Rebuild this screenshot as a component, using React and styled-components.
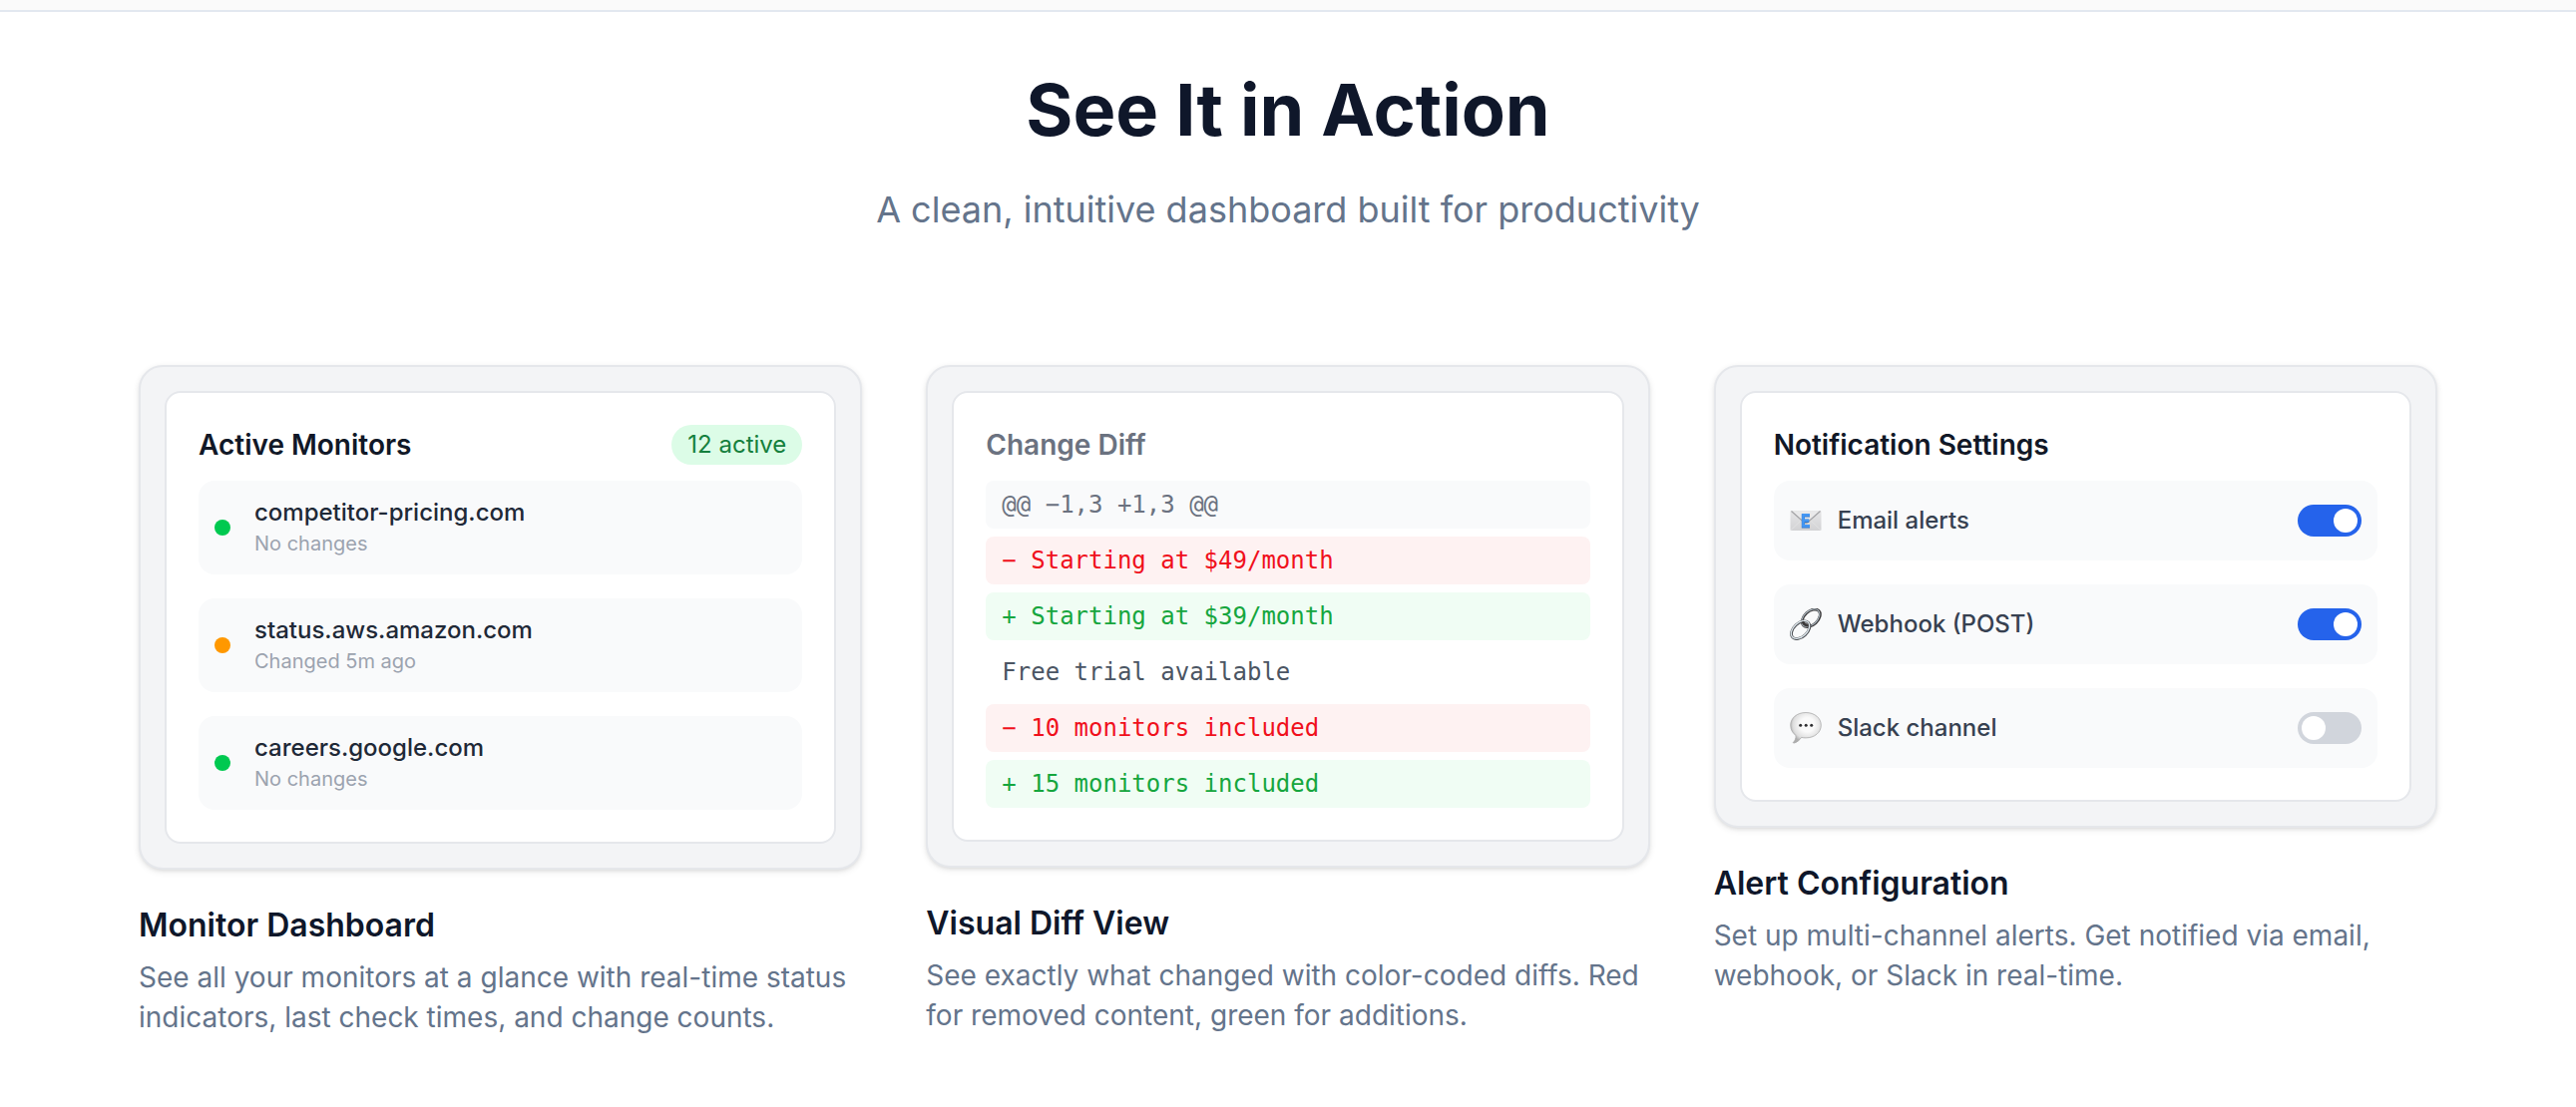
import { useState } from "react";
import styled, { createGlobalStyle } from "styled-components";

const GlobalStyle = createGlobalStyle`
  * {
    box-sizing: border-box;
    margin: 0;
    padding: 0;
  }
  body {
    background-color: #fff;
    color: #0f172a;
    font-family: Inter, "Liberation Sans", sans-serif;
    -webkit-font-smoothing: antialiased;
  }
`;

const PreviousEdge = styled.div`
  height: 12px;
  background-color: #fafafa;
  border-bottom: solid 2px #e2e8f0;
`;

const Section = styled.section`
  padding: 58px 48px 64px;
`;

const Heading = styled.header`
  display: flex;
  flex-direction: column;
  align-items: center;
  gap: 32px;
  margin-bottom: 128px;
  text-align: center;
  h2 {
    font-size: 72px;
    line-height: 80px;
    font-weight: 700;
  }
  p {
    font-size: 36px;
    line-height: 56px;
    color: #64748b;
  }
`;

const Grid = styled.div`
  display: grid;
  grid-template-columns: repeat(3, minmax(0, 1fr));
  align-items: start;
  gap: 64px;
  max-width: 2304px;
  margin: 0 auto;
`;

const Frame = styled.div`
  padding: 24px;
  background-color: #f3f4f6;
  border: solid 2px #e5e7eb;
  border-radius: 24px;
  box-shadow: 0 2px 6px rgba(0, 0, 0, 0.1), 0 2px 4px -2px rgba(0, 0, 0, 0.1);
`;

const Panel = styled.div`
  padding: 32px;
  background-color: #fff;
  border: solid 2px #e5e7eb;
  border-radius: 16px;
`;

const PanelHeader = styled.div`
  display: flex;
  align-items: center;
  justify-content: space-between;
  margin-bottom: 16px;
`;

const PanelTitle = styled.h4`
  font-size: 28px;
  line-height: 40px;
  font-weight: 600;
  color: ${(props) => (props.$muted ? "#6b7280" : "#111827")};
`;

const Pill = styled.span`
  padding: 4px 16px;
  border-radius: 20px;
  background-color: #dcfce7;
  color: #15803d;
  font-size: 24px;
  line-height: 32px;
`;

const List = styled.ul`
  display: flex;
  flex-direction: column;
  gap: 24px;
  list-style: none;
`;

const Row = styled.li`
  display: flex;
  align-items: center;
  gap: ${(props) => props.$gap || 16}px;
  padding: 16px;
  border-radius: 16px;
  background-color: #f9fafb;
`;

const Dot = styled.span`
  flex: none;
  width: 16px;
  height: 16px;
  border-radius: 50%;
  background-color: ${(props) => props.$color};
`;

const SiteName = styled.p`
  font-size: 24px;
  line-height: 32px;
  font-weight: 500;
  color: #1f2937;
`;

const SiteStatus = styled.p`
  font-size: 20px;
  line-height: 30px;
  color: #9ca3af;
`;

const lineColors = {
  meta: { color: "#6b7280", background: "#f9fafb" },
  removed: { color: "#f0101c", background: "#fef2f2" },
  added: { color: "#16a63e", background: "#f0fdf4" },
  same: { color: "#4b5563", background: "transparent" },
};

const Diff = styled.div`
  display: flex;
  flex-direction: column;
  gap: 8px;
`;

const DiffLine = styled.code`
  padding: 8px 16px;
  border-radius: 8px;
  font-family: "DejaVu Sans Mono", "Liberation Mono", monospace;
  font-size: 24px;
  line-height: 32px;
  white-space: pre;
  color: ${(props) => lineColors[props.$kind].color};
  background-color: ${(props) => lineColors[props.$kind].background};
`;

const ChannelLabel = styled.label`
  display: flex;
  flex: 1;
  align-items: center;
  gap: 16px;
  height: 48px;
  font-size: 24px;
  line-height: 32px;
  font-weight: 500;
  color: #374151;
  cursor: pointer;
  svg {
    flex: none;
    width: 32px;
    height: 32px;
  }
`;

const Switch = styled.input`
  appearance: none;
  flex: none;
  display: flex;
  align-items: center;
  width: 64px;
  height: 32px;
  padding: 4px;
  border-radius: 16px;
  background-color: #d1d5dc;
  cursor: pointer;
  &::before {
    content: "";
    width: 24px;
    height: 24px;
    border-radius: 50%;
    background-color: #fff;
  }
  &:checked {
    justify-content: flex-end;
    background-color: #2563eb;
  }
`;

const Caption = styled.div`
  margin-top: 32px;
  h3 {
    margin-bottom: 8px;
    font-size: 32px;
    line-height: 48px;
    font-weight: 600;
  }
  p {
    font-size: 28px;
    line-height: 40px;
    color: #64748b;
  }
`;

const EmailIcon = () => (
  <svg viewBox="0 0 32 32" aria-hidden="true" fill="none">
    <defs>
      <linearGradient id="paper" x1="0" y1="0" x2="0" y2="1">
        <stop offset="0" stopColor="#e6e6e7" />
        <stop offset="1" stopColor="#d2d2d4" />
      </linearGradient>
    </defs>
    <rect x="0.5" y="6" width="31" height="20" rx="1" fill="url(#paper)" />
    <path d="M1 25.5 11 16M31 25.5 21 16" stroke="#e2e2e3" strokeWidth="1" />
    <path d="M1.5 6.5 14.5 18q1.5 1.2 3 0L30.5 6.5" fill="#e9e9ea" stroke="#a3a3a6" strokeWidth="1.2" />
    <path d="M20 10.9h-6.600v11h6.600M13.400 16.400h5.800" stroke="#2a6fbd" strokeWidth="3.200" />
    <path d="M20 10.400h-6.600v11h6.600M13.400 15.900h5.800" stroke="#4597f3" strokeWidth="2.600" />
  </svg>
);

const LinkIcon = () => (
  <svg viewBox="0 0 32 32" aria-hidden="true" fill="none">
    <g transform="rotate(-43 21.3 9.8)">
      <ellipse cx="21.3" cy="9.8" rx="10.6" ry="6.8" stroke="#3c3a3b" strokeWidth="2.8" />
      <ellipse cx="21.1" cy="9.3" rx="10.6" ry="6.8" stroke="#b9c6cf" strokeWidth="1" />
    </g>
    <g transform="rotate(-43 10.5 21.5)">
      <ellipse cx="10.5" cy="21.8" rx="10.8" ry="6.8" stroke="#4c4f53" strokeWidth="2.8" />
      <ellipse cx="10.5" cy="21.4" rx="10.8" ry="6.8" stroke="#dfe8ee" strokeWidth="1.3" />
    </g>
    <path d="M12.600 13.500q2.200 3.600 6 3.600" stroke="#3c3a3b" strokeWidth="2.600" />
  </svg>
);

const ChatIcon = () => (
  <svg viewBox="0 0 32 32" aria-hidden="true">
    <defs>
      <radialGradient id="bubble" cx="0.55" cy="0.4" r="0.58">
        <stop offset="0.4" stopColor="#fafafa" />
        <stop offset="0.8" stopColor="#dedede" />
        <stop offset="1" stopColor="#aeaeae" />
      </radialGradient>
    </defs>
    <path
      d="M16 0.500c8.700 0 15.300 5.400 15.300 12.700S24.700 25.900 16 25.900c-1.600 0-3-0.100-4.400-0.500-1.800 2.600-4.500 5.100-7.600 5.700-0.700 0.100-0.800-0.500-0.400-0.900 1.700-1.700 2.600-4 2.400-6.700C2.700 21.100 0.700 17.500 0.700 13.200 0.700 5.900 7.300 0.500 16 0.500z"
      fill="url(#bubble)"
      stroke="#a2a2a2"
      strokeWidth="0.700"
    />
    <circle cx="10.700" cy="13.200" r="1.500" fill="#2f2f31" />
    <circle cx="16.200" cy="13.200" r="1.500" fill="#2f2f31" />
    <circle cx="21.700" cy="13.200" r="1.500" fill="#2f2f31" />
  </svg>
);

const monitors = [
  { name: "competitor-pricing.com", status: "No changes", color: "#00c950" },
  { name: "status.aws.amazon.com", status: "Changed 5m ago", color: "#ff9800" },
  { name: "careers.google.com", status: "No changes", color: "#00c950" },
];

const diffLines = [
  { kind: "meta", text: "@@ −1,3 +1,3 @@" },
  { kind: "removed", text: "− Starting at $49/month" },
  { kind: "added", text: "+ Starting at $39/month" },
  { kind: "same", text: "Free trial available" },
  { kind: "removed", text: "− 10 monitors included" },
  { kind: "added", text: "+ 15 monitors included" },
];

const channels = [
  { id: "email", label: "Email alerts", Icon: EmailIcon },
  { id: "webhook", label: "Webhook (POST)", Icon: LinkIcon },
  { id: "slack", label: "Slack channel", Icon: ChatIcon },
];

const Showcase = ({ title, text, children }) => (
  <article>
    <Frame>
      <Panel>{children}</Panel>
    </Frame>
    <Caption>
      <h3>{title}</h3>
      <p>{text}</p>
    </Caption>
  </article>
);

const App = () => {
  const [enabled, setEnabled] = useState({
    email: true,
    webhook: true,
    slack: false,
  });

  return (
    <>
      <GlobalStyle />
      <PreviousEdge />
      <Section>
        <Heading>
          <h2>See It in Action</h2>
          <p>A clean, intuitive dashboard built for productivity</p>
        </Heading>

        <Grid>
          <Showcase
            title="Monitor Dashboard"
            text="See all your monitors at a glance with real-time status indicators, last check times, and change counts."
          >
            <PanelHeader>
              <PanelTitle>Active Monitors</PanelTitle>
              <Pill>12 active</Pill>
            </PanelHeader>
            <List>
              {monitors.map((monitor) => (
                <Row key={monitor.name} $gap={24}>
                  <Dot $color={monitor.color} />
                  <div>
                    <SiteName>{monitor.name}</SiteName>
                    <SiteStatus>{monitor.status}</SiteStatus>
                  </div>
                </Row>
              ))}
            </List>
          </Showcase>

          <Showcase
            title="Visual Diff View"
            text="See exactly what changed with color-coded diffs. Red for removed content, green for additions."
          >
            <PanelHeader>
              <PanelTitle $muted>Change Diff</PanelTitle>
            </PanelHeader>
            <Diff>
              {diffLines.map((line) => (
                <DiffLine key={line.text} $kind={line.kind}>
                  {line.text}
                </DiffLine>
              ))}
            </Diff>
          </Showcase>

          <Showcase
            title="Alert Configuration"
            text="Set up multi-channel alerts. Get notified via email, webhook, or Slack in real-time."
          >
            <PanelHeader>
              <PanelTitle>Notification Settings</PanelTitle>
            </PanelHeader>
            <List>
              {channels.map(({ id, label, Icon }) => (
                <Row key={id}>
                  <ChannelLabel htmlFor={id}>
                    <Icon />
                    {label}
                  </ChannelLabel>
                  <Switch
                    id={id}
                    type="checkbox"
                    role="switch"
                    checked={enabled[id]}
                    onChange={(e) => setEnabled({ ...enabled, [id]: e.target.checked })}
                  />
                </Row>
              ))}
            </List>
          </Showcase>
        </Grid>
      </Section>
    </>
  );
};

export default App;
